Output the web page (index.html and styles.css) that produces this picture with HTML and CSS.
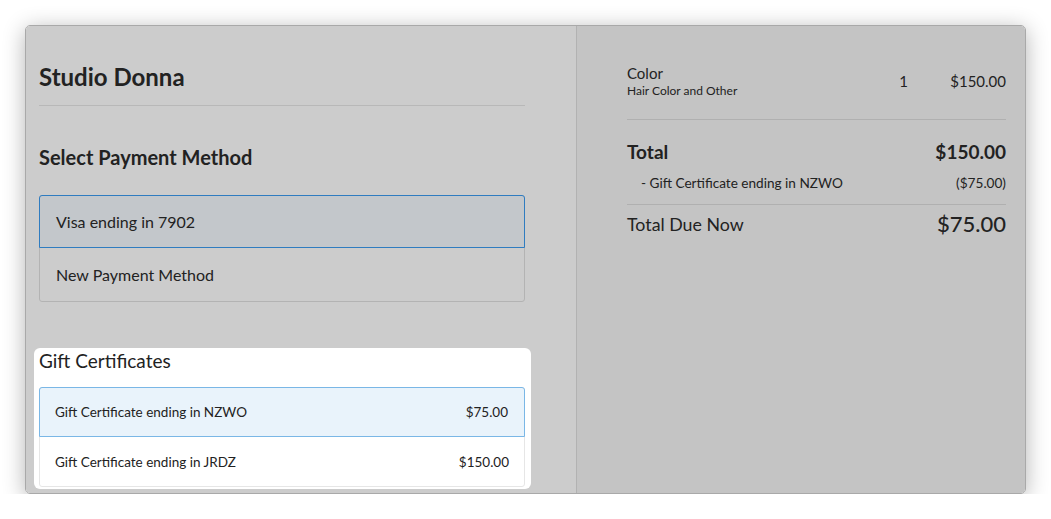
FILE: index.html
```html
<!DOCTYPE html>
<html lang="en">
  <head>
    <meta charset="UTF-8" />
    <title>Checkout - Studio Donna</title>
    <link rel="stylesheet" href="styles.css">
  </head>
  <body>
    <div class="checkout">
      <div class="checkout-left">
        <h1 class="business-name">Studio Donna</h1>

        <h2 class="section-title">Select Payment Method</h2>
        <div class="option-list">
          <div class="option selected">Visa ending in 7902</div>
          <div class="option">New Payment Method</div>
        </div>

        <div class="gift-box">
          <h2 class="gift-title">Gift Certificates</h2>
          <div class="gift-list">
            <div class="gift-row selected">
              <span>Gift Certificate ending in NZWO</span>
              <span>$75.00</span>
            </div>
            <div class="gift-row">
              <span>Gift Certificate ending in JRDZ</span>
              <span>$150.00</span>
            </div>
          </div>
        </div>
      </div>

      <div class="checkout-right">
        <div class="line-item">
          <div class="item-info">
            <div class="item-name">Color</div>
            <div class="item-desc">Hair Color and Other</div>
          </div>
          <div class="item-qty">1</div>
          <div class="item-price">$150.00</div>
        </div>

        <div class="summary">
          <div class="summary-row total">
            <span>Total</span>
            <span>$150.00</span>
          </div>
          <div class="summary-row discount">
            <span>- Gift Certificate ending in NZWO</span>
            <span>($75.00)</span>
          </div>
        </div>

        <div class="summary-row due">
          <span>Total Due Now</span>
          <span class="due-amount">$75.00</span>
        </div>
      </div>
    </div>
  </body>
</html>
```

FILE: styles.css
```css
* {
  margin: 0;
  padding: 0;
  box-sizing: border-box;
}

body {
  font-family: Lato, "Liberation Sans", sans-serif;
  background: #ffffff;
  color: #222222;
  padding: 25px 25px 0 25px;
}

.checkout {
  width: 1001px;
  height: 469px;
  display: grid;
  grid-template-columns: 551px 1fr;
  border: 1px solid #a9a9a9;
  border-radius: 5px;
  overflow: hidden;
  box-shadow: 0 4px 22px rgba(0, 0, 0, 0.3);
}

/* Left side */
.checkout-left {
  background: #cccccc;
  border-right: 1px solid #b2b2b2;
  padding: 36px 51px 0 13px;
}

.business-name {
  font-size: 24px;
  font-weight: 700;
  line-height: 30px;
  padding-bottom: 13px;
  border-bottom: 1px solid #b8b8b8;
}

.section-title {
  font-size: 20px;
  font-weight: 700;
  line-height: 24px;
  margin-top: 39px;
}

.option-list {
  margin-top: 26px;
  border: 1px solid #b3b3b3;
  border-radius: 3px;
}

.option {
  height: 53px;
  padding: 0 16px;
  display: flex;
  align-items: center;
  font-size: 16px;
}

.option.selected {
  background: #c3c7cb;
  margin: -1px -1px 0 -1px;
  height: 53px;
  padding-left: 16px;
  border: 1px solid #2f7cc0;
  border-radius: 3px 3px 0 0;
}

.gift-box {
  margin: 46px -6px 0 -5px;
  padding: 0 6px 2px 5px;
  background: #ffffff;
  border-radius: 6px;
}

.gift-title {
  font-size: 19px;
  font-weight: 400;
  line-height: 26px;
  margin-bottom: 13px;
}

.gift-list {
  border: 1px solid #e6e6e6;
  border-radius: 3px;
}

.gift-row {
  height: 49px;
  padding: 0 15px;
  display: flex;
  justify-content: space-between;
  align-items: center;
  font-size: 13.5px;
}

.gift-row.selected {
  background: #e9f3fb;
  margin: -1px -1px 0 -1px;
  height: 50px;
  padding: 0 16px 0 15px;
  border: 1px solid #7ab7e6;
  border-radius: 3px 3px 0 0;
}

/* Right side */
.checkout-right {
  background: #c4c4c4;
  padding: 38px 19px 0 50px;
}

.line-item {
  display: flex;
  align-items: center;
  padding-bottom: 21px;
  border-bottom: 1px solid #b0b0b0;
}

.item-info {
  flex: 1;
}

.item-name {
  font-size: 15px;
  line-height: 19px;
}

.item-desc {
  font-size: 12px;
  line-height: 15px;
}

.item-qty {
  font-size: 15px;
  width: 51px;
}

.item-price {
  font-size: 15px;
}

.summary {
  padding: 20px 0 12px;
  border-bottom: 1px solid #b0b0b0;
}

.summary-row {
  display: flex;
  justify-content: space-between;
  align-items: center;
}

.summary-row.total {
  font-size: 19px;
  font-weight: 700;
  line-height: 24px;
}

.summary-row.discount {
  font-size: 13.6px;
  line-height: 18px;
  margin-top: 10px;
  padding-left: 14px;
}

.summary-row.due {
  font-size: 17.8px;
  line-height: 24px;
  margin-top: 7px;
}

.due-amount {
  font-size: 22px;
  font-weight: 500;
}
```
